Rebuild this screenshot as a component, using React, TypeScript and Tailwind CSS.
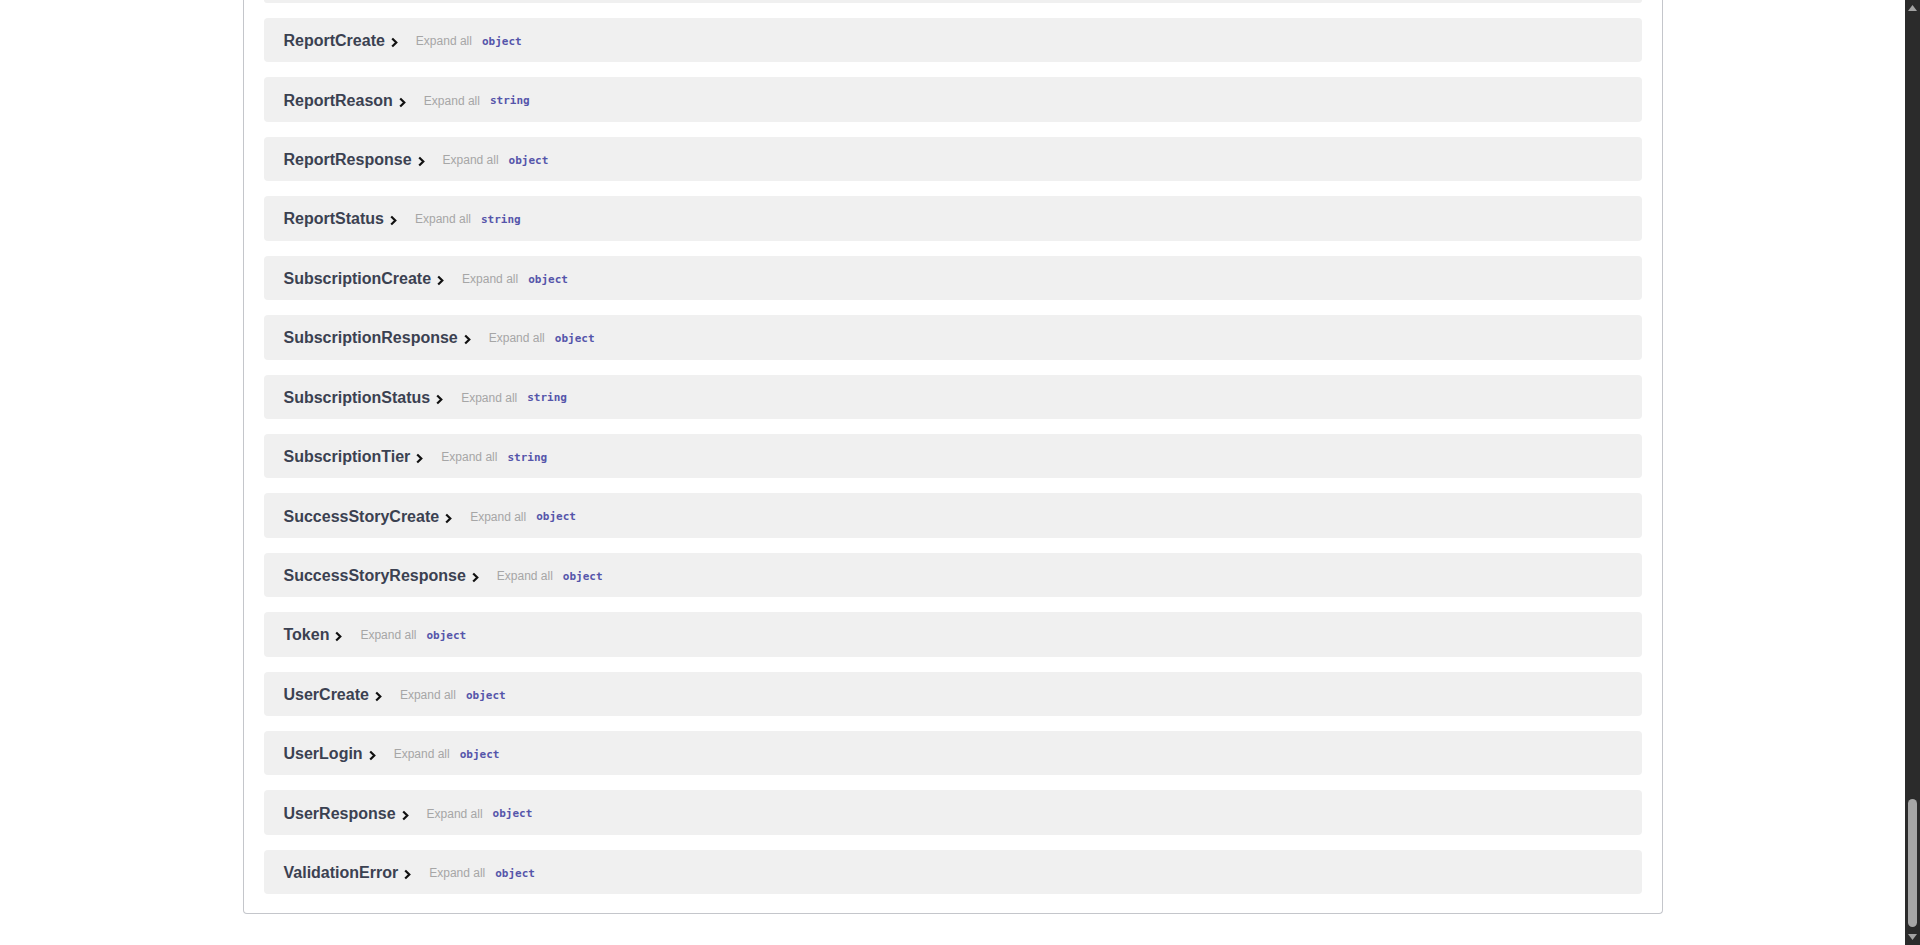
import { type ReactNode } from 'react';

const schemas: { name: string; type: string }[] = [
    { name: 'ReportCreate', type: 'object' },
    { name: 'ReportReason', type: 'string' },
    { name: 'ReportResponse', type: 'object' },
    { name: 'ReportStatus', type: 'string' },
    { name: 'SubscriptionCreate', type: 'object' },
    { name: 'SubscriptionResponse', type: 'object' },
    { name: 'SubscriptionStatus', type: 'string' },
    { name: 'SubscriptionTier', type: 'string' },
    { name: 'SuccessStoryCreate', type: 'object' },
    { name: 'SuccessStoryResponse', type: 'object' },
    { name: 'Token', type: 'object' },
    { name: 'UserCreate', type: 'object' },
    { name: 'UserLogin', type: 'object' },
    { name: 'UserResponse', type: 'object' },
    { name: 'ValidationError', type: 'object' },
];

function Chevron() {
    return (
        <svg width="7" height="11" viewBox="0 0 7 11" className="ml-[6px] mt-[3px] shrink-0">
            <path d="M1.2 1.5 L5.3 5.5 L1.2 9.5" fill="none" stroke="#111" strokeWidth="2.2" />
        </svg>
    );
}

function SchemaRow({ name, type }: { name: string; type: string }) {
    return (
        <div className="mb-[15px] flex h-[44.43px] items-center rounded-[4px] bg-[#f0f0f0] pl-[20px] pt-[2px]">
            <span className="font-['Liberation_Sans',Arial,sans-serif] text-[16px] font-bold text-[#3b4151]">
                {name}
            </span>
            <Chevron />
            <span className="ml-[18px] font-['Liberation_Sans',Arial,sans-serif] text-[12px] text-[#a6a6a6]">
                Expand all
            </span>
            <span className="ml-[10px] mt-[2px] font-['DejaVu_Sans_Mono',monospace] text-[11px] font-bold text-[#55a]">
                {type}
            </span>
        </div>
    );
}

function Scrollbar(): ReactNode {
    return (
        <div className="flex h-[945px] w-[15px] shrink-0 flex-col items-center bg-[#2b2b2b]">
            <svg width="9" height="6" viewBox="0 0 9 6" className="mt-[5px]">
                <path d="M0 6 L4.5 0 L9 6 Z" fill="#a3a3a3" />
            </svg>
            <div className="flex-1" />
            <div className="h-[128px] w-[9px] rounded-full bg-[#a6a6a6]" />
            <svg width="9" height="6" viewBox="0 0 9 6" className="mb-[5px] mt-[7px]">
                <path d="M0 0 L4.5 6 L9 0 Z" fill="#a3a3a3" />
            </svg>
        </div>
    );
}

export default function App() {
    return (
        <div className="flex h-[945px] w-full overflow-hidden bg-white">
            <div className="min-w-0 flex-1">
                <div className="mx-auto max-w-[1460px] px-[20px]">
                    <section className="rounded-b-[4px] border-x border-b border-[#c4c6cb] px-[20px] pb-[4px]">
                        <div className="mb-[15px] h-[3px] rounded-b-[4px] bg-[#f0f0f0]" />
                        {schemas.map((s) => (
                            <SchemaRow key={s.name} name={s.name} type={s.type} />
                        ))}
                    </section>
                </div>
            </div>
            <Scrollbar />
        </div>
    );
}
